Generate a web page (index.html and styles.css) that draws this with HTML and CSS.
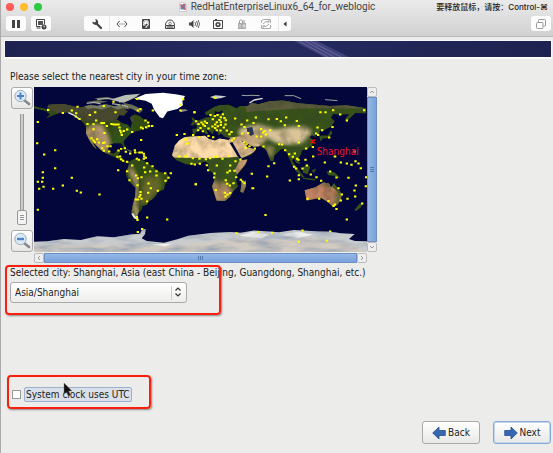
FILE: index.html
```html
<!DOCTYPE html>
<html lang="en">
<head>
<meta charset="utf-8">
<meta name="viewport" content="width=device-width, initial-scale=1">
<title>RedHatEnterpriseLinux6_64_for_weblogic</title>
<link rel="stylesheet" href="styles.css">
</head>
<body>
<header class="window-bar">
  <div class="title-row">
    <div class="lights"><button class="light close" aria-label="Close"></button><button class="light minimize" aria-label="Minimize"></button><button class="light zoom" aria-label="Zoom"></button></div>
    <h1 class="title"><svg width="8" height="10" viewBox="0 0 8 10"><path d="M.5 .5h5l2 2v7h-7z" fill="#fff" stroke="#bbb" stroke-width=".6"/><rect x="1.500" y="2.500" width="5" height="5" fill="#6785bb"/><path d="M1.500 2.500l5 5M4 2.500h2.500" stroke="#e0504a" stroke-width="1.400"/></svg><span>RedHatEnterpriseLinux6_64_for_weblogic</span></h1>
    <p class="hint">要释放鼠标，请按：Control-⌘</p>
  </div>
  <div class="tool-row">
    <button class="tool" aria-label="Pause"><svg width="12" height="12" viewBox="0 0 12 12"><path d="M2 2h3v8H2zM7 2h3v8H7z" fill="#444"/></svg></button>
    <button class="tool" aria-label="Snapshots"><svg width="12" height="12" viewBox="0 0 12 12"><path d="M1.500 1.500h8v5M1.500 1.500v7h4M1.500 10h4" fill="none" stroke="#444"/><path d="M3 3h5v4H3z" fill="#555"/><circle cx="9" cy="9" r="2.500" fill="#444"/><path d="M9 7.500V9h1" stroke="#fff" stroke-width=".7" fill="none"/></svg></button>
    <div class="tool-group">
      <button class="tool" aria-label="Settings"><svg width="12" height="12" viewBox="0 0 12 12"><path d="M5.500 5.500L10 10" stroke="#444" stroke-width="2.300" stroke-linecap="round"/><path d="M1.400 3.400a3 3 0 0 0 5.400 2.200A3 3 0 0 0 4.300 1.100L5 3.400 3.600 4.500z" fill="#444"/></svg></button>
      <button class="tool" aria-label="Network"><svg width="12" height="12" viewBox="0 0 12 12"><path d="M3.500 3L1 6l2.500 3M8.500 3L11 6 8.500 9" fill="none" stroke="#444"/><path d="M3.500 6h5" stroke="#444" stroke-dasharray="1 1"/></svg></button>
      <button class="tool" aria-label="Hard disk"><svg width="12" height="12" viewBox="0 0 12 12"><path d="M2.500 1.500h7v9h-7z" fill="none" stroke="#444"/><path d="M3 2h1.500L3 4zM9 2H7.500L9 4zM3 10h3L3 7z" fill="#444"/><path d="M4 9.500L7 6" stroke="#444" stroke-width="1.600"/><path d="M6 10h3V6.500z" fill="#555"/><circle cx="6" cy="5" r="2.400" fill="none" stroke="#777" stroke-width=".6"/></svg></button>
      <button class="tool" aria-label="CD drive"><svg width="12" height="12" viewBox="0 0 12 12"><path d="M1.500 7a4.500 5 0 0 1 9 0" fill="none" stroke="#444"/><circle cx="6" cy="5.500" r="1.300" fill="none" stroke="#666" stroke-width=".8"/><path d="M1.500 7.500h9v3h-9z" fill="#ddd" stroke="#444"/><path d="M3 9h6" stroke="#444"/></svg></button>
      <button class="tool" aria-label="Sound"><svg width="12" height="12" viewBox="0 0 12 12"><path d="M1 4.500h2L5.500 2v8L3 7.500H1z" fill="#444"/><path d="M7 4q1.300 2 0 4M8.600 3q2 3 0 6M10.200 2q2.600 4 0 8" fill="none" stroke="#444" stroke-width=".8"/></svg></button>
      <button class="tool" aria-label="Camera"><svg width="12" height="12" viewBox="0 0 12 12"><path d="M1.500 2.500h9v8h-9zM3 1.500h2" fill="none" stroke="#444"/><circle cx="6" cy="6.500" r="2.600" fill="#444"/><circle cx="6" cy="6.500" r="1" fill="#fff"/></svg></button>
      <button class="tool" aria-label="Encryption"><svg width="12" height="12" viewBox="0 0 12 12"><path d="M2 5h8v6H2z" fill="#aaa"/><path d="M3.500 5V3q1.500-3 3 0v2M8 5V2" fill="none" stroke="#999"/><path d="M4 6v4M7 7h2v2H7z" stroke="#eee" stroke-width=".8" fill="none"/></svg></button>
      <button class="tool" aria-label="Sharing"><svg width="12" height="12" viewBox="0 0 12 12"><path d="M1.500 5V2.500l2-1h7V5M10.500 7v3.500h-9V7" fill="none" stroke="#aaa"/><path d="M3 6q3-4 6-2M9 6Q6 10 3 8M7 4h2V2M5 8H3v2" fill="none" stroke="#aaa"/></svg></button>
      <button class="tool" aria-label="Collapse"><svg width="8" height="8" viewBox="0 0 8 8"><path d="M5.500 1.500v5L2.500 4z" fill="#333"/></svg></button>
    </div>
    <button class="tool windows" aria-label="Full screen"><svg width="12" height="12" viewBox="0 0 12 12"><rect x="1.500" y="4.500" width="6.500" height="6" rx="1" fill="none" stroke="#999"/><path d="M3.500 4V2.500q0-1 1-1h5q1 0 1 1V7q0 1-1 1H8.500" fill="none" stroke="#999"/></svg></button>
  </div>
</header>

<main class="installer">
  <div class="banner"><svg width="60" height="16" viewBox="0 0 60 16"><path d="M0 0h23l32 16H30z" fill="#6664a4" opacity=".45"/><path d="M5 0l29 16M11 0l29 16M16 0l31 16" stroke="#a18bbd" opacity=".45"/></svg></div>
  <p class="prompt" id="prompt">Please select the nearest city in your time zone:</p>
  <section class="map-panel" aria-labelledby="prompt">
    <div class="zoom-tools">
      <button class="lens" aria-label="Zoom in"><svg width="18" height="18" viewBox="0 0 18 18"><path d="M11 11l5 4" stroke="#888" stroke-width="2.600" stroke-linecap="round"/><circle cx="7.500" cy="7" r="5.700" fill="#dce9f6" stroke="#9badc0"/><path d="M7.500 3.500v7M4 7h7" stroke="#4b83c5" stroke-width="2"/></svg></button>
      <input class="zoom-range" type="range" min="0" max="10" value="0" aria-label="Map zoom">
      <button class="lens" aria-label="Zoom out"><svg width="18" height="18" viewBox="0 0 18 18"><path d="M11 11l5 4" stroke="#888" stroke-width="2.600" stroke-linecap="round"/><circle cx="7.500" cy="7" r="5.700" fill="#dce9f6" stroke="#9badc0"/><path d="M4 7h7" stroke="#4b83c5" stroke-width="2.400"/></svg></button>
    </div>
    <div class="map-frame">
      <svg class="map" viewBox="0 0 999 496" preserveAspectRatio="none" role="img" aria-label="World map">
        <defs>
          <filter id="terrain" x="0" y="0" width="100%" height="100%"><feTurbulence type="fractalNoise" baseFrequency=".03" numOctaves="4" seed="4" result="n"/><feColorMatrix in="n" values="0 0 0 0 .04  0 0 0 0 .06  0 0 0 0 .02  1.300 0 0 0 -.48" result="shade"/><feComposite in="shade" in2="SourceAlpha" operator="in" result="s"/><feMerge><feMergeNode in="SourceGraphic"/><feMergeNode in="s"/></feMerge></filter>
          <filter id="ice" x="0" y="0" width="100%" height="100%"><feTurbulence type="fractalNoise" baseFrequency=".012 .05" numOctaves="4" seed="9" result="n"/><feColorMatrix in="n" values="0 0 0 0 .25  0 0 0 0 .32  0 0 0 0 .42  1.600 0 0 0 -.6" result="shade"/><feComposite in="shade" in2="SourceAlpha" operator="in" result="s"/><feMerge><feMergeNode in="SourceGraphic"/><feMergeNode in="s"/></feMerge></filter>
          <filter id="soft"><feGaussianBlur stdDeviation="7"/></filter>
          <clipPath id="west"><path d="M102 78L140 86 145 73 190 70 235 82 262 78 300 86 345 82 372 84 383 94 372 106 358 104 350 118 366 128 384 134 392 145 396 128 390 112 404 102 420 108 438 122 455 138 442 146 423 142 424 151 410 152 395 158 382 170 371 182 372 192 380 205 375 207 364 190 342 189 328 194 324 206 328 218 342 220 352 210 362 212 356 224 352 229 368 234 372 244 392 246 384 250 365 244 346 232 320 220 301 209 282 188 273 174 280 190 290 207 280 198 268 180 258 160 258 139 249 127 238 116 228 102 205 97 182 97 160 105 138 114 150 103 138 92 102 84z"/><path d="M388 244L404 236 425 238 445 250 464 265 478 275 500 280 508 291 496 312 491 329 475 334 465 350 455 360 440 364 443 374 427 378 425 390 415 398 412 411 418 420 402 416 393 400 399 372 405 350 407 322 392 309 380 290 376 273 385 260z"/></clipPath>
          <clipPath id="east"><path d="M8 160L7 147 20 144 20 134 12 130 24 121 34 118 47 112 60 110 62 101 72 106 86 100 95 102 99 90 84 96 75 92 73 104 66 112 59 102 48 105 45 97 72 80 90 74 117 73 140 84 150 77 172 77 186 67 205 72 238 63 278 60 320 68 360 72 420 77 470 75 529 84V99L496 98 480 113 471 125 466 115 478 102 450 103 430 101 423 112 434 124 423 139 404 149 390 153 386 164 376 162 377 170 365 165 358 172 372 180 366 196 350 208 336 210 333 222 323 238 332 252 318 248 313 235 306 241 321 264 330 274 322 276 310 262 303 246 295 229 286 208 274 206 253 226 250 243 241 242 229 210 214 198 190 199 167 187 153 180 173 201 197 209 184 224 151 236 125 184 126 193 140 224 151 240 172 238 166 256 143 280 137 295 144 320 129 334 120 350 105 363 80 362 66 319 74 296 69 280 55 267 55 251 46 244 26 251 0 254-12 252-41 240-54 225-45 195-32 180-16 170 8 166 30 168 44 166 57 176 75 181 89 175 116 179 122 173 105 170 93 160 86 166 80 150 71 151 69 163 56 151 48 147 55 160 48 163 37 149 25 150 15 161zM9 136L20 124 9 112 4 112 9 124 1 134zM155 308L168 300 168 317 160 338 151 335z"/><path d="M344 330L376 321 400 307 417 310 423 322 432 309 444 325 456 342 452 360 441 375 430 380 411 364 393 353 350 361zM306 255l12 6 25 29-6 2-18-18zM337 264l14-12 10 8-8 22-14-4zM365 270l14-5-8 15zM409 274l24 2 19 18-20-7-17-2zM340 292l37 5-3 4-36-5zM388 168l6-2 20 0 9-17 4 10-12 14-16 2-8 9zM508 371l11-2-7 13-14 11-5-3z"/></clipPath>
        </defs>
        <rect width="999" height="496" fill="#02063b"/>
        <g transform="translate(-102 -20)">
          <g filter="url(#terrain)">
            <g clip-path="url(#west)"><path d="M102 50h420v380H102z" fill="#314d16"/><path d="M102 55h300v68H210z" fill="#4a4931"/><path d="M260 138l45-8 20 34 8 25-8 32-35-7-40-50z" fill="#b5986e" filter="url(#soft)"/><path d="M345 130h55v55h-65z" fill="#31521d"/><path d="M387 260l25 50-8 72 10 30" fill="none" stroke="#c9a67a" stroke-width="14" filter="url(#soft)"/><path d="M430 290l50-10 5 45-45 45-25 3z" fill="#65672c" filter="url(#soft)"/></g>
            <path d="M253 78l18-5 20 3 25-5 28 7 18-6 18 5 8 11-20-4-17 4-17-7-29 7-24-5-18 3zM284 54l38-4 15 4-40 4zM258 65l36-5 30 4-28 4zM355 53l44-9 14 4-30 14-26 6zM370 68l27 5 32 16-10 9-22-12-20-4zM376 205l22 8-8 2zM403 215l19 1-5 4z" fill="#777b62"/>
          </g>
          <path d="M330 58l46-14 45-4-19 13-31 14z" fill="#b9bfb6"/><path d="M402 55l35-14 52-4 38 5 28 5-8 16 2 12-17 11-30 8-13 20-10-3-16-22-8-19-18-9z" fill="#fff"/>
          <path d="M260 69l22-3 20 5M292 57l28-3 24 3M336 70l24 4M366 74l18 6" stroke="#a9afa6" stroke-width="4" fill="none"/>
          <path d="M205 97l18 8 13 10" stroke="#e7e9df" stroke-width="4" fill="none"/><path d="M397 400l7 12 10 4" stroke="#dfe6e3" stroke-width="6" fill="none"/>
          <path d="M538 88l18-1 8 4-22 5z" fill="#8b8c80"/>
        </g>
        <g transform="translate(468 -20)">
          <g filter="url(#terrain)"><g clip-path="url(#east)">
            <path d="M-60 50h600v350H-60z" fill="#38521c"/><path d="M160 60h370v25H330L170 95z" fill="#5b5b3c"/>
            <path d="M-65 175L45 166 126 180 152 230 70 234-62 232z" fill="#ffdcab"/><path d="M110 173l40-5 60 25-12 20-50 25-35-60z" fill="#f4cc9c"/>
            <path d="M148 145l60-13 45 16 50-8 50 0 12 18-32 32-50 2-55-18-48 12-32-24z" fill="#dcc499" filter="url(#soft)"/><path d="M148 158l50-4 30 20-14 22-28 0-32-20z" fill="#c4a77c" filter="url(#soft)"/><path d="M238 170l45 4 20 17-38-5z" fill="#dfc9a2" filter="url(#soft)"/><path d="M225 195l28 5-8 33-12-12z" fill="#a8965f" filter="url(#soft)"/>
            <path d="M152 236l25 0-35 48-8-14z" fill="#cc9d76"/><path d="M62 302l45 5 25 30-25 30-40-2z" fill="#b88f66" filter="url(#soft)"/><path d="M152 300h18v42h-20z" fill="#97805a"/>
            <path d="M340 310l72-5 30 30 16 20-20 25-98-10z" fill="#c68566"/><path d="M400 300l40 0-3 17-30 4z" fill="#6a6838" filter="url(#soft)"/><path d="M442 318l17 22-12 37-16 5 5-24z" fill="#526030" filter="url(#soft)"/>
          </g></g>
          <path d="M60 50l16-5 34 3-15 5-20 3z" fill="#c9cfcc"/><path d="M155 45l16 1 12-1 26 1M284 46l27 0 22 9M405 58l37 3" stroke="#9ca39c" stroke-width="3" fill="none"/><path d="M178 68l15-9 25-5" stroke="#dde0da" stroke-width="4" fill="none"/>
          <path d="M119 188l8-3 24 43 5 6-8 2-13-21z" fill="#05093c"/><path d="M170 143l17-3 5 22-10 5-10-11z" fill="#263653"/>
        </g>
        <g filter="url(#ice)"><path d="M0 465L40 464 90 457 140 460 190 449 240 452 295 443 318 441 324 430 335 427 333 443 323 455 338 463 390 468 430 458 463 447 530 439 590 436 620 438 660 431 735 437 780 430 855 434 890 435 920 440 962 442 945 457 963 463 999 464V496H0z" fill="#c9ccce"/><path d="M0 478l170-4 110 4 130 0 190-21 120 4 120-8 100 15 60 31H0z" fill="#d2cbc2"/><path d="M615 447l40-12 50 8-20 12zM740 444l55-10 40 10-45 11zM350 473l64-2-20 8z" fill="#f2f2ee"/></g>
        <g class="cities">
          <path transform="translate(-102 -20)" d="M144 89h1M188 98h1M215 91h1M232 79h1M228 99h1M227 109h1M238 116h1M269 104h1M285 96h1M311 77h1M340 64h1M346 96h1M411 56h1M421 86h1M413 91h1M458 91h1M541 73h1M549 57h1M541 91h1M583 96h1M113 125h1M111 189h1M132 223h1M165 210h1M165 264h1M128 276h1M128 293h1M113 305h1M126 305h1M130 320h1M117 326h1M159 326h1M188 316h1M215 293h1M230 332h1M242 337h1M298 343h1M113 389h1M262 131h1M280 132h1M288 121h1M304 128h1M311 128h1M320 137h1M334 131h1M341 133h1M348 133h1M355 133h1M358 142h1M360 151h1M363 157h1M365 164h1M371 152h1M381 148h1M396 155h1M423 142h1M428 145h1M438 141h1M446 137h1M456 137h1M444 127h1M436 121h1M280 147h1M313 158h1M274 174h1M280 181h1M291 177h1M284 186h1M296 187h1M309 188h1M313 187h1M306 204h1M311 212h1M322 198h1M331 198h1M327 214h1M355 211h1M363 206h1M374 204h1M377 215h1M390 220h1M404 210h1M405 217h1M418 217h1M425 217h1M431 221h1M432 228h1M437 233h1M431 236h1M352 230h1M360 229h1M363 237h1M369 242h1M381 245h1M410 236h1M416 239h1M396 256h1M423 179h1M381 273h1M354 270h1M388 300h1M432 262h1M441 249h1M457 258h1M450 274h1M435 276h1M408 286h1M413 294h1M424 291h1M469 273h1M469 286h1M495 279h1M512 279h1M505 293h1M496 302h1M473 332h1M445 310h1M452 324h1M412 315h1M421 336h1M421 344h1M418 350h1M407 358h1M414 358h1M424 356h1M444 338h1M441 364h1M410 411h1M412 420h1M441 412h1M501 418h1M413 456h1M426 447h1M530 164h1M556 178h1M560 190h1M537 229h1M554 229h1M587 312h1"/>
          <path transform="translate(468 -20)" d="M75 52h1M13 96h1M18 123h1M25 131h1M34 127h1M39 133h1M44 124h1M50 128h1M61 104h1M68 117h1M74 107h1M82 104h1M88 119h1M92 111h1M98 102h1M103 113h1M92 126h1M80 126h1M75 133h1M67 139h1M83 138h1M92 134h1M101 142h1M107 120h1M106 133h1M91 151h1M80 150h1M75 143h1M55 145h1M44 137h1M31 143h1M24 150h1M38 153h1M27 171h1M9 164h1M-17 161h1M69 171h1M55 167h1M110 151h1M118 162h1M124 155h1M135 115h1M154 133h1M163 140h1M171 121h1M190 128h1M197 112h1M235 117h1M260 116h1M288 112h1M272 123h1M320 122h1M391 96h1M406 96h1M429 90h1M450 103h1M470 121h1M522 90h1M427 140h1M382 142h1M326 137h1M284 135h1M396 150h1M378 160h1M384 164h1M417 172h1M213 146h1M219 157h1M223 152h1M240 150h1M227 163h1M213 169h1M200 169h1M174 158h1M156 160h1M125 181h1M131 175h1M162 187h1M169 192h1M178 198h1M166 203h1M194 205h1M220 199h1M151 238h1M136 243h1M8 234h1M28 236h1M47 237h1M60 234h1M72 230h1M81 230h1M97 236h1M116 228h1M4 251h1M14 253h1M29 251h1M50 255h1M54 270h1M80 256h1M120 256h1M133 272h1M119 272h1M112 277h1M73 280h1M72 292h1M107 300h1M111 311h1M119 316h1M130 309h1M138 291h1M152 299h1M157 304h1M17 312h1M77 330h1M104 338h1M106 349h1M112 343h1M120 339h1M185 281h1M187 324h1M189 324h1M226 405h1M163 309h1M235 258h1M252 249h1M231 289h1M299 301h1M267 192h1M276 193h1M285 210h1M297 222h1M308 230h1M314 220h1M321 236h1M325 239h1M326 187h1M348 205h1M368 200h1M346 239h1M369 229h1M404 247h1M434 229h1M312 260h1M318 265h1M337 265h1M350 256h1M326 285h1M326 297h1M362 283h1M379 291h1M393 302h1M420 274h1M439 292h1M475 293h1M435 229h1M452 247h1M470 250h1M484 254h1M496 243h1M505 250h1M512 264h1M528 291h1M527 318h1M493 214h1M497 316h1M493 331h1M495 349h1M472 356h1M455 343h1M452 361h1M387 356h1M415 363h1M352 356h1M430 378h1M434 373h1M439 387h1M445 324h1M516 370h1M470 418h1M139 460h1M204 456h1M246 458h1M337 451h1M420 454h1M326 485h1M410 482h1M-10 229h1M-13 178h1M-7 190h1"/>
        </g>
        <path d="M831 158l11 12m0-12l-11 12" stroke="#f00" stroke-width="5"/>
        <text class="city-name" x="848" y="203">Shanghai</text>
      </svg>
      <div class="scroll vertical"><button aria-label="Scroll up"><svg width="6" height="4"><path d="M1 3l2-2 2 2"/></svg></button><span class="grip"></span><button aria-label="Scroll down"><svg width="6" height="4"><path d="M1 1l2 2 2-2"/></svg></button></div>
      <div class="scroll horizontal"><button aria-label="Scroll left"><svg width="4" height="6"><path d="M3 1L1 3l2 2"/></svg></button><span class="grip"></span><button aria-label="Scroll right"><svg width="4" height="6"><path d="M1 1l2 2-2 2"/></svg></button></div>
    </div>
  </section>
  <section class="city-choice">
    <label for="city">Selected city: Shanghai, Asia (east China - Beijing, Guangdong, Shanghai, etc.)</label>
    <div class="select-box"><select id="city"><option>Asia/Shanghai</option></select><svg width="8" height="12" viewBox="0 0 8 12"><path d="M1.500 4.500L4 2l2.500 2.500M1.500 7.500L4 10l2.500-2.500" fill="none" stroke="#333" stroke-width="1.200"/></svg></div>
  </section>
  <section class="clock-choice">
    <input type="checkbox" id="utc"><label for="utc">System clock uses UTC</label>
    <svg class="pointer" width="9" height="14" viewBox="0 0 9 14"><path d="M1 0v11l2.500-2L5.500 13l2-1-2-4H9z" fill="#111" stroke="#777" stroke-width=".4"/></svg>
  </section>
  <footer class="actions">
    <button><svg width="14" height="14" viewBox="0 0 14 14"><path d="M.7 7L7 1v3.500h6.300v5H7V13z" fill="#3568ae" stroke="#234f90" stroke-width=".8"/></svg>Back</button>
    <button class="primary"><svg width="14" height="14" viewBox="0 0 14 14"><path d="M13.300 7L7 1v3.500H.7v5H7V13z" fill="#3568ae" stroke="#234f90" stroke-width=".8"/></svg>Next</button>
  </footer>
</main>
</body>
</html>
```
FILE: styles.css
```css
* { box-sizing: border-box; }
body {
  margin: 0;
  min-height: 100vh;
  display: flex;
  flex-direction: column;
  background: #ececeb;
  border-left: 1px solid #aaa;
  color: #222;
  font: 10px/14px "DejaVu Sans Condensed", "DejaVu Sans", sans-serif;
}
button, select, input { font: inherit; color: inherit; margin: 0; padding: 0; }
h1, p { margin: 0; }
svg { display: block; flex: none; }

.window-bar {
  height: 37px;
  background: linear-gradient(#ebebeb, #d0d0d0);
  border-bottom: 1px solid #b9b9b9;
}
.title-row {
  display: grid;
  grid-template-columns: 1fr auto 1fr;
  align-items: center;
  height: 14px;
  padding: 0 5px;
}
.lights { display: flex; gap: 6px; }
.light { width: 8px; height: 8px; border: 0; border-radius: 50%; }
.close { background: #fc5b57; }
.minimize { background: #fdbc2e; }
.zoom { background: #2ccb3f; }
.title {
  display: flex;
  align-items: center;
  gap: 4px;
  font: 10px/14px Roboto, "Liberation Sans", sans-serif;
  color: #444;
}
.hint {
  justify-self: end;
  font: 500 8px/14px Inter, "Noto Sans CJK SC", sans-serif;
  white-space: nowrap;
}
.tool-row { display: flex; padding: 2px 2px 0 5px; }
.tool {
  display: flex;
  align-items: center;
  justify-content: center;
  width: 20px;
  height: 15px;
  border: 0;
  border-radius: 3px;
  background: #fcfcfc;
}
.tool + .tool { margin-left: 5px; }
.tool-group {
  display: flex;
  margin-left: 33px;
  border-radius: 3px;
  background: #fcfcfc;
}
.tool-group .tool { width: 24px; margin: 0; background: none; }
.tool-group .tool:first-child { width: 26px; border-right: 1px solid #e6e6e6; border-radius: 0; }
.tool-group .tool:last-child { width: 13px; border-left: 1px solid #e6e6e6; border-radius: 0; }
.windows { margin-left: auto; }

.installer { flex: 1; display: flex; flex-direction: column; padding: 4px 2px 9px 4px; }
.banner {
  height: 17px;
  border-bottom: 1px solid #fff;
  background: linear-gradient(90deg, #1d2250, #252b60 45%, #1d2250);
  outline: 1px solid #f8f8f8;
}
.banner svg { margin-left: 53%; }
.prompt { margin: 12px 0 3px 5px; }

.map-panel { display: flex; gap: 1px; padding-left: 6px; }
.zoom-tools { display: flex; flex-direction: column; align-items: center; gap: 5px; width: 22px; height: 165px; }
.lens {
  display: flex;
  align-items: center;
  justify-content: center;
  width: 22px;
  height: 22px;
  border: 1px solid #aaa;
  border-radius: 3px;
  background: linear-gradient(#fff, #e6e6e4);
}
.zoom-range {
  appearance: none;
  writing-mode: vertical-lr;
  direction: rtl;
  flex: 1;
  min-height: 0;
  width: 10px;
  background: linear-gradient(90deg, transparent 3px, #999 3px 4px, #ccc 4px 6px, #999 6px 7px, transparent 7px);
}
.zoom-range::-webkit-slider-thumb {
  appearance: none;
  width: 10px;
  height: 15px;
  border: 1px solid #999;
  border-radius: 2px;
  background: repeating-linear-gradient(#999 0 1px, transparent 1px 2px) center / 4px 5px no-repeat, #f4f4f4;
}
.map-frame { display: grid; grid-template-columns: 333px 10px; grid-template-rows: 165px 10px; row-gap: 1px; }
.map { width: 100%; height: 100%; }
.cities { fill: none; stroke: #ff0; stroke-width: 6px; stroke-linecap: square; }
.city-name { fill: #f0102c; font: 30px "DejaVu Sans Condensed", "DejaVu Sans", sans-serif; }
.scroll { display: flex; }
.vertical { flex-direction: column; }
.scroll button {
  display: flex;
  align-items: center;
  justify-content: center;
  width: 10px;
  height: 10px;
  border: 1px solid #bbb;
  border-radius: 2px;
  background: #eee;
}
.scroll path { fill: none; stroke: #999; }
.grip { flex: 1; border: 1px solid #6c90c4; }
.vertical .grip { background: repeating-linear-gradient(#5278ae 0 1px, transparent 1px 2px) center / 4px 5px no-repeat, linear-gradient(90deg, #94b7e6, #7aa2da); }
.horizontal .grip { background: repeating-linear-gradient(90deg, #5278ae 0 1px, transparent 1px 2px) center / 5px 4px no-repeat, linear-gradient(#94b7e6, #7aa2da); }

.city-choice, .clock-choice { position: relative; }
.city-choice::after, .clock-choice::after {
  content: "";
  position: absolute;
  border: 2px solid #f9200f;
  border-radius: 4px;
  box-shadow: 1px 1px 2px #888;
  pointer-events: none;
}
.city-choice { margin: 3px 0 0 5px; }
.city-choice::after { left: -5px; top: -1px; width: 216px; height: 50px; box-sizing: border-box; }
.city-choice label { display: block; }
.select-box { position: relative; width: 177px; margin-top: 2px; }
.select-box select {
  appearance: none;
  width: 100%;
  height: 21px;
  padding: 0 4px;
  border: 1px solid #aaa;
  border-radius: 3px;
  background: linear-gradient(#ccc, #ccc) right 14px center / 1px 14px no-repeat, linear-gradient(#fff, #ededeb);
}
.select-box svg { position: absolute; right: 5px; top: 4px; pointer-events: none; }
.clock-choice { display: flex; align-items: center; gap: 3px; margin: 84px 0 0 7px; }
.clock-choice::after { left: -5px; top: -12px; width: 144px; height: 34px; box-sizing: border-box; }
.clock-choice input { appearance: none; width: 9px; height: 9px; border: 1px solid #999; background: #fff; }
.clock-choice label { padding: 0 1px; border: 1px solid #9cb1cd; border-radius: 2px; background: #d9e0ea; line-height: 13px; }
.pointer { position: absolute; left: 51px; top: -4px; }

.actions { display: flex; justify-content: flex-end; gap: 13px; margin-top: auto; }
.actions button {
  display: flex;
  align-items: center;
  justify-content: center;
  gap: 2px;
  width: 58px;
  height: 23px;
  border: 1px solid #aaa;
  border-radius: 3px;
  background: linear-gradient(#fff, #e8e8e6);
}
.actions .primary { border-color: #86a9d8; box-shadow: inset 0 0 0 1px #c5d5ea; }
```
